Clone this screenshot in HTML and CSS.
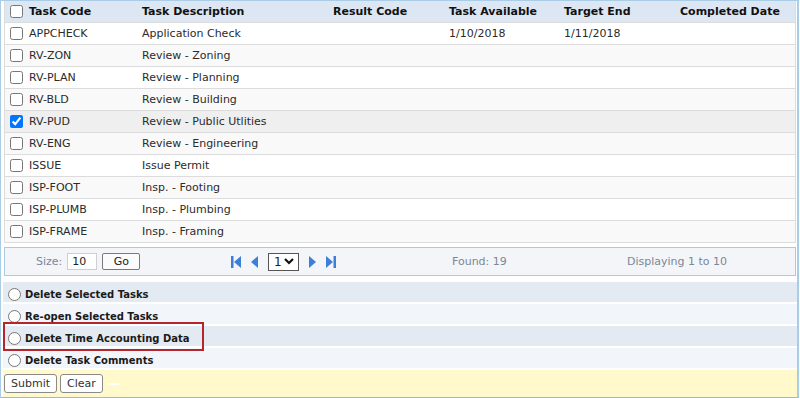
FILE: index.html
```html
<!DOCTYPE html>
<html lang="en">
<head>
    <meta charset="UTF-8">
    <title>Workflow Tasks</title>
    <link rel="stylesheet" href="styles.css">
</head>
<body>
    <div class="frame">
        <table class="tasks">
            <colgroup>
                <col class="c-code"><col class="c-desc"><col class="c-result">
                <col class="c-avail"><col class="c-end"><col class="c-done">
            </colgroup>
            <thead>
                <tr>
                    <th><span class="chk-cell"><input type="checkbox"> Task Code</span></th>
                    <th>Task Description</th>
                    <th>Result Code</th>
                    <th>Task Available</th>
                    <th>Target End</th>
                    <th>Completed Date</th>
                </tr>
            </thead>
            <tbody>
                <tr>
                    <td><span class="chk-cell"><input type="checkbox"> APPCHECK</span></td>
                    <td>Application Check</td><td></td><td>1/10/2018</td><td>1/11/2018</td><td></td>
                </tr>
                <tr>
                    <td><span class="chk-cell"><input type="checkbox"> RV-ZON</span></td>
                    <td>Review - Zoning</td><td></td><td></td><td></td><td></td>
                </tr>
                <tr>
                    <td><span class="chk-cell"><input type="checkbox"> RV-PLAN</span></td>
                    <td>Review - Planning</td><td></td><td></td><td></td><td></td>
                </tr>
                <tr>
                    <td><span class="chk-cell"><input type="checkbox"> RV-BLD</span></td>
                    <td>Review - Building</td><td></td><td></td><td></td><td></td>
                </tr>
                <tr class="selected">
                    <td><span class="chk-cell"><input type="checkbox" checked> RV-PUD</span></td>
                    <td>Review - Public Utlities</td><td></td><td></td><td></td><td></td>
                </tr>
                <tr>
                    <td><span class="chk-cell"><input type="checkbox"> RV-ENG</span></td>
                    <td>Review - Engineering</td><td></td><td></td><td></td><td></td>
                </tr>
                <tr>
                    <td><span class="chk-cell"><input type="checkbox"> ISSUE</span></td>
                    <td>Issue Permit</td><td></td><td></td><td></td><td></td>
                </tr>
                <tr>
                    <td><span class="chk-cell"><input type="checkbox"> ISP-FOOT</span></td>
                    <td>Insp. - Footing</td><td></td><td></td><td></td><td></td>
                </tr>
                <tr>
                    <td><span class="chk-cell"><input type="checkbox"> ISP-PLUMB</span></td>
                    <td>Insp. - Plumbing</td><td></td><td></td><td></td><td></td>
                </tr>
                <tr>
                    <td><span class="chk-cell"><input type="checkbox"> ISP-FRAME</span></td>
                    <td>Insp. - Framing</td><td></td><td></td><td></td><td></td>
                </tr>
            </tbody>
        </table>

        <div class="pager">
            <div class="pg-size">
                <span>Size:</span>
                <input type="text" class="size-input" value="10">
                <button class="go-btn">Go</button>
            </div>
            <div class="pg-nav">
                <svg width="10" height="12" viewBox="0 0 10 12"><rect x="0" y="0" width="2.5" height="12" fill="#3c7fd9"/><polygon points="10,0 3,6 10,12" fill="#3c7fd9"/></svg>
                <svg width="7" height="12" viewBox="0 0 7 12"><polygon points="7,0 0,6 7,12" fill="#3c7fd9"/></svg>
                <span class="page-select">1
                    <svg width="10" height="7" viewBox="0 0 10 7"><polyline points="1,1 5,5 9,1" fill="none" stroke="#111" stroke-width="2.2"/></svg>
                </span>
                <svg width="7" height="12" viewBox="0 0 7 12"><polygon points="0,0 7,6 0,12" fill="#3c7fd9"/></svg>
                <svg width="10" height="12" viewBox="0 0 10 12"><polygon points="0,0 7,6 0,12" fill="#3c7fd9"/><rect x="7.5" y="0" width="2.5" height="12" fill="#3c7fd9"/></svg>
            </div>
            <div class="pg-found">Found: 19</div>
            <div class="pg-display">Displaying 1 to 10</div>
        </div>

        <div class="actions">
            <label class="opt"><input type="radio" name="action"> Delete Selected Tasks</label>
            <label class="opt alt"><input type="radio" name="action"> Re-open Selected Tasks</label>
            <label class="opt marked"><input type="radio" name="action"> Delete Time Accounting Data</label>
            <label class="opt alt"><input type="radio" name="action"> Delete Task Comments</label>
            <div class="submit-row">
                <button class="btn">Submit</button>
                <button class="btn">Clear</button>
                <span class="dash"></span>
            </div>
        </div>
    </div>
</body>
</html>
```

FILE: styles.css
```css
body {
    margin: 0;
    padding: 0;
    background: #fff;
    font-family: "DejaVu Sans", Verdana, sans-serif;
    font-size: 11px;
    color: #2b2b2b;
}
.frame {
    width: 799px;
    box-sizing: border-box;
    border-left: 1px solid #a9cde6;
    border-top: 1px solid #a9cde6;
    border-right: 2px solid #a9cde6;
    border-bottom: 1px solid #a6b4c8;
    padding-left: 2px;
}
/* Task table */
.tasks {
    width: 792px;
    margin-left: 1px;
    table-layout: fixed;
    border-collapse: separate;
    border-spacing: 0;
    border-left: 1px solid #dcdcdc;
    border-right: 1px solid #dcdcdc;
}
.c-code { width: 131px; }
.c-desc { width: 191px; }
.c-result { width: 116px; }
.c-avail { width: 115px; }
.c-end { width: 116px; }
.c-done { width: 121px; }
.tasks th, .tasks td {
    height: 21px;
    padding: 0 0 0 6px;
    border-bottom: 1px solid #dcdcdc;
    text-align: left;
    white-space: nowrap;
    vertical-align: middle;
}
.tasks th {
    background: #dde7f4;
    color: #111;
    font-weight: bold;
}
.tasks tbody tr:nth-child(even) td {
    background: #f9f9f9;
}
.tasks tbody tr.selected td {
    background: #efefef;
}
.tasks th:first-child, .tasks td:first-child {
    padding-left: 5px;
}
.chk-cell {
    display: flex;
    align-items: center;
    gap: 6px;
}
.chk-cell input {
    margin: 0;
    width: 13px;
    height: 13px;
}
/* Pager */
.pager {
    display: flex;
    align-items: center;
    width: 792px;
    height: 29px;
    box-sizing: border-box;
    margin: 4px 0 0 1px;
    background: #f3f5f8;
    border: 1px solid #a8cbe3;
    color: #7b8797;
}
.pg-size {
    width: 226px;
    padding-left: 31px;
    box-sizing: border-box;
    display: flex;
    align-items: center;
}
.size-input {
    width: 30px;
    height: 17px;
    box-sizing: border-box;
    margin: 0 0 0 5px;
    padding: 0 0 0 4px;
    border: 1px solid #cfcfcf;
    font-family: "DejaVu Sans", Verdana, sans-serif;
    font-size: 11px;
    color: #222;
}
.go-btn {
    width: 38px;
    height: 17px;
    margin-left: 5px;
    padding: 0;
    background: #fbfbfb;
    border: 1px solid #7a7a7a;
    border-radius: 2px;
    font-family: "DejaVu Sans", Verdana, sans-serif;
    font-size: 11px;
    color: #222;
}
.pg-nav {
    width: 221px;
    display: flex;
    align-items: center;
    gap: 10px;
}
.page-select {
    display: flex;
    align-items: center;
    justify-content: space-between;
    width: 31px;
    height: 18px;
    box-sizing: border-box;
    padding: 0 4px 0 5px;
    background: #fff;
    border: 1px solid #555;
    color: #222;
    font-size: 12px;
}
.pg-found {
    width: 175px;
}
/* Actions */
.actions {
    margin-top: 6px;
    width: 794px;
}
.opt {
    position: relative;
    display: flex;
    align-items: center;
    height: 20px;
    margin-bottom: 2px;
    padding-top: 4px;
    box-sizing: border-box;
    background: #e3eaf2;
    font-size: 10px;
    font-weight: bold;
    color: #1a1a1a;
}
.opt.alt {
    background: #f2f6fa;
}
.opt input {
    width: 13px;
    height: 13px;
    margin: 0 4px 0 5px;
}
.opt.marked {
    z-index: 1;
}
.opt.marked::after {
    content: "";
    position: absolute;
    left: 0;
    top: -4px;
    width: 201px;
    height: 29px;
    box-sizing: border-box;
    border: 2px solid #b3262c;
}
.submit-row {
    display: flex;
    align-items: center;
    gap: 3px;
    height: 27px;
    padding-left: 1px;
    background: #fff9cc;
}
.btn {
    height: 19px;
    padding: 0 6px;
    background: #fff;
    border: 1px solid #8a8a8a;
    border-radius: 3px;
    font-family: "DejaVu Sans", Verdana, sans-serif;
    font-size: 11px;
    color: #333;
}
.dash {
    width: 10px;
    height: 2px;
    margin-left: 3px;
    background: #fff;
}
```
